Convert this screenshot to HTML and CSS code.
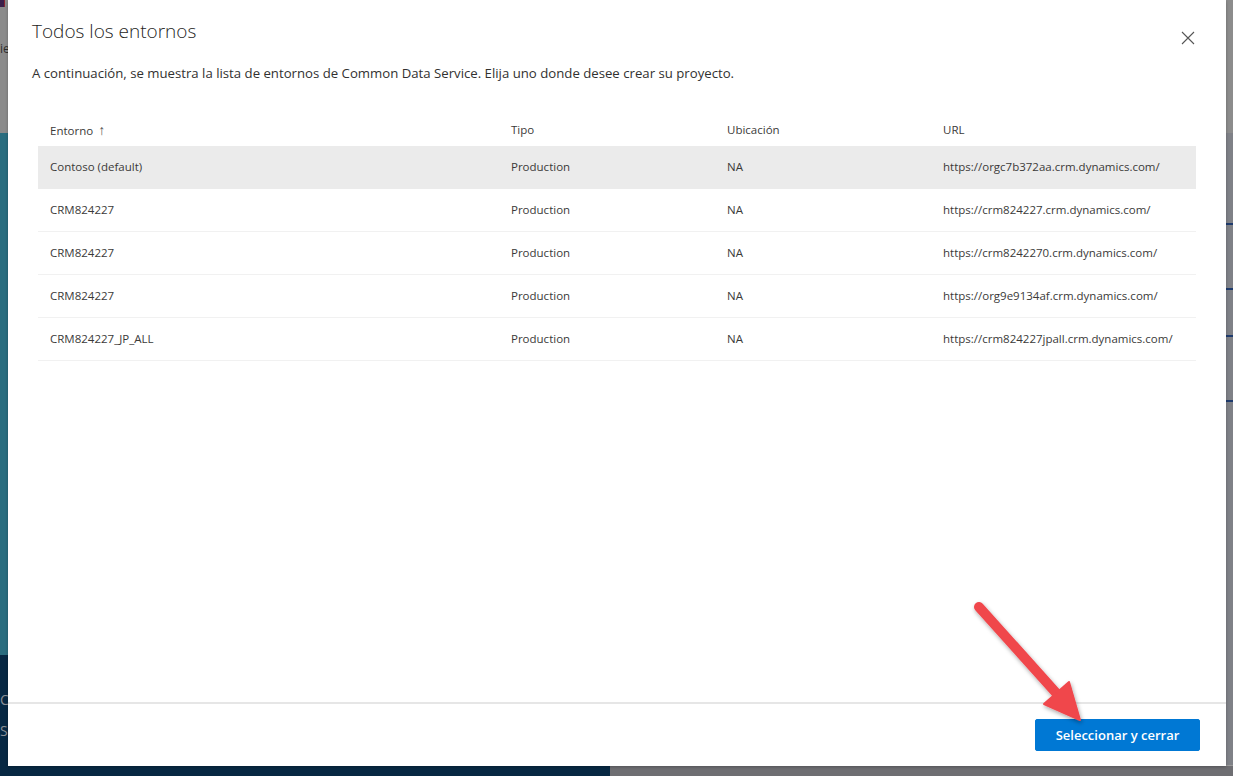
FILE: index.html
```html
<!DOCTYPE html>
<html lang="es">
<head>
  <meta charset="UTF-8" />
  <meta name="viewport" content="width=device-width, initial-scale=1" />
  <title>Todos los entornos</title>
  <link rel="stylesheet" href="styles.css">
</head>
<body>
  <div class="app">
    <div class="app-side">
      <div class="side-top">
        <div class="side-logo"></div>
        <span class="frag">ie</span>
      </div>
      <div class="side-banner"></div>
      <div class="side-bottom">
        <span class="frag-c">C</span>
        <span class="frag-su">Su</span>
      </div>
    </div>
    <div class="app-main">
      <div class="main-top"></div>
      <div class="main-body">
        <div class="tick t1"></div>
        <div class="tick t2"></div>
        <div class="tick t3"></div>
        <div class="tick t4"></div>
      </div>
      <div class="main-foot"></div>
    </div>
  </div>

  <div class="dialog">
    <div class="dialog-head">
      <h1>Todos los entornos</h1>
      <button class="close" aria-label="Cerrar">
        <svg width="14" height="14" viewBox="0 0 14 14"><path d="M1 1L13 13M13 1L1 13" stroke="#555" stroke-width="1.1" fill="none"/></svg>
      </button>
    </div>
    <p class="subtitle">A continuación, se muestra la lista de entornos de Common Data Service. Elija uno donde desee crear su proyecto.</p>

    <div class="table">
      <div class="row head">
        <div class="cell">Entorno <span class="sort">&#8593;</span></div>
        <div class="cell">Tipo</div>
        <div class="cell">Ubicación</div>
        <div class="cell">URL</div>
      </div>
      <div class="row selected">
        <div class="cell">Contoso (default)</div>
        <div class="cell">Production</div>
        <div class="cell">NA</div>
        <div class="cell">https://orgc7b372aa.crm.dynamics.com/</div>
      </div>
      <div class="row">
        <div class="cell">CRM824227</div>
        <div class="cell">Production</div>
        <div class="cell">NA</div>
        <div class="cell">https://crm824227.crm.dynamics.com/</div>
      </div>
      <div class="row">
        <div class="cell">CRM824227</div>
        <div class="cell">Production</div>
        <div class="cell">NA</div>
        <div class="cell">https://crm8242270.crm.dynamics.com/</div>
      </div>
      <div class="row">
        <div class="cell">CRM824227</div>
        <div class="cell">Production</div>
        <div class="cell">NA</div>
        <div class="cell">https://org9e9134af.crm.dynamics.com/</div>
      </div>
      <div class="row">
        <div class="cell">CRM824227_JP_ALL</div>
        <div class="cell">Production</div>
        <div class="cell">NA</div>
        <div class="cell">https://crm824227jpall.crm.dynamics.com/</div>
      </div>
    </div>

    <div class="dialog-foot">
      <button class="primary">Seleccionar y cerrar</button>
    </div>
  </div>

  <svg class="arrow" width="1233" height="776" viewBox="0 0 1233 776">
    <defs>
      <filter id="shadow" x="-20%" y="-20%" width="140%" height="140%">
        <feDropShadow dx="1" dy="2" stdDeviation="2" flood-color="#000" flood-opacity="0.35"/>
      </filter>
    </defs>
    <g filter="url(#shadow)" fill="#f0464c" stroke="#f0464c">
      <line x1="979" y1="607" x2="1058" y2="695" stroke-width="10" stroke-linecap="round"/>
      <polygon points="1080,720 1044,704 1069,682" stroke-width="2" stroke-linejoin="round"/>
    </g>
  </svg>
</body>
</html>
```

FILE: styles.css
```css
body {
  margin: 0;
  padding: 0;
  font-family: "Segoe UI", "Open Sans", sans-serif;
  color: #323130;
  overflow: hidden;
}
.app {
  display: flex;
  width: 1233px;
  height: 776px;
  background: #858688;
}
.app-side {
  width: 610px;
  display: flex;
  flex-direction: column;
}
.side-top {
  height: 133px;
  background: #8b8b8b;
}
.side-logo {
  width: 4px;
  height: 7px;
  background: #3a1f4a;
  border-right: 1px solid #8a2430;
}
.frag {
  display: block;
  margin-top: 33px;
  font-size: 12px;
  color: #2e2e2e;
}
.side-banner {
  height: 522px;
  background: #2a6d7f;
}
.side-bottom {
  flex: 1;
  background: #072843;
  color: #8a8f96;
  font-size: 14px;
}
.frag-c {
  display: block;
  margin-top: 35px;
}
.frag-su {
  display: block;
  margin-top: 12px;
}
.app-main {
  flex: 1;
  display: flex;
  flex-direction: column;
}
.main-top {
  height: 133px;
  background: #8c8c8c;
}
.main-body {
  flex: 1;
  background: #7f8187;
  display: flex;
  flex-direction: column;
  align-items: flex-end;
}
.tick {
  width: 40px;
  height: 2px;
  background: #1f3c6e;
}
.t1 { margin-top: 90px; }
.t2 { margin-top: 63px; }
.t3 { margin-top: 45px; }
.t4 { margin-top: 63px; }
.main-foot {
  height: 10px;
  background: #6e6e72;
  border-top: 1px solid #9a9a9a;
}

.dialog {
  position: absolute;
  left: 8px;
  top: 0;
  width: 1218px;
  height: 766px;
  background: #fff;
  box-shadow: 0 1px 3px rgba(0,0,0,0.25);
  display: flex;
  flex-direction: column;
}
.dialog-head {
  display: flex;
  justify-content: space-between;
  align-items: flex-start;
  padding: 17px 24px 0 24px;
}
h1 {
  margin: 0;
  font-size: 19px;
  font-weight: 300;
  color: #252423;
  line-height: 28px;
}
.close {
  border: none;
  background: none;
  padding: 0;
  margin-top: 14px;
  margin-right: 7px;
  width: 14px;
  height: 14px;
  cursor: pointer;
}
.subtitle {
  margin: 18px 24px 0 24px;
  font-size: 13.2px;
  line-height: 20px;
  color: #323130;
}
.table {
  margin: 31px 30px 0 30px;
  font-size: 11.5px;
  color: #3b3a39;
}
.row {
  display: grid;
  grid-template-columns: 461px 216px 216px 1fr;
  height: 42px;
  align-items: center;
  border-bottom: 1px solid #f1f1f1;
}
.row.head {
  height: 32px;
  border-bottom: none;
}
.row.selected {
  background: #ebebeb;
  border-bottom-color: #ebebeb;
}
.cell {
  padding-left: 12px;
  padding-bottom: 1px;
  white-space: nowrap;
}
.sort {
  font-size: 14px;
  font-weight: 300;
  color: #555;
  margin-left: 2px;
}
.dialog-foot {
  margin-top: auto;
  border-top: 2px solid #e6e6e6;
  display: flex;
  justify-content: flex-end;
  padding: 15px 26px 15px 0;
}
.primary {
  width: 165px;
  height: 32px;
  background: #0078d4;
  color: #fff;
  border: 1px solid #0078d4;
  border-radius: 2px;
  font-family: "Segoe UI", "Open Sans", sans-serif;
  font-size: 13px;
  font-weight: 600;
  cursor: pointer;
}
.arrow {
  position: absolute;
  left: 0;
  top: 0;
  pointer-events: none;
}
```
